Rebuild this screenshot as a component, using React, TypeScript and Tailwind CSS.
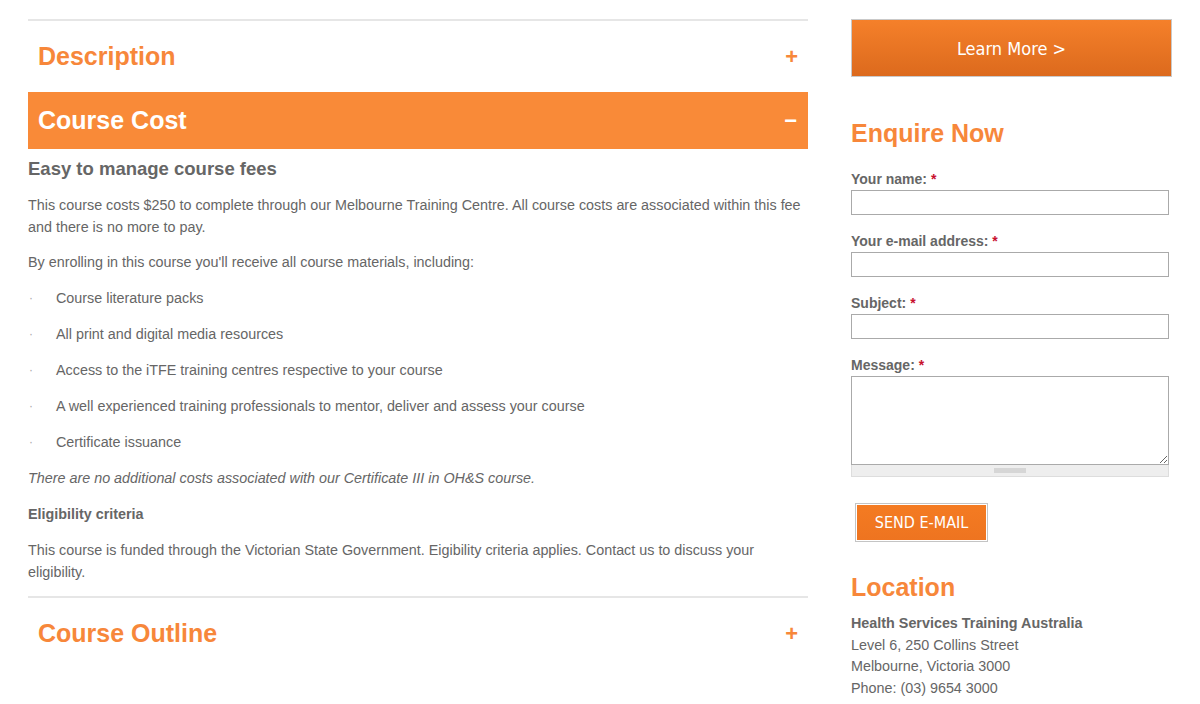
import React from 'react';

const bodyFont = { fontFamily: '"Liberation Sans", Arial, Helvetica, sans-serif' };
const btnFont = { fontFamily: '"DejaVu Sans Condensed", "DejaVu Sans", Tahoma, sans-serif' };

const items = [
  'Course literature packs',
  'All print and digital media resources',
  'Access to the iTFE training centres respective to your course',
  'A well experienced training professionals to mentor, deliver and assess your course',
  'Certificate issuance',
];

function AccordionHeader({ title, open }: { title: string; open?: boolean }) {
  if (open) {
    return (
      <div className="h-[57px] bg-[#f98a38] flex items-center justify-between pl-[10px] pr-[10px]">
        <h2 className="text-[25px] font-bold text-white">{title}</h2>
        <span className="text-white font-bold text-[22px] leading-none mr-[1px]">−</span>
      </div>
    );
  }
  return (
    <div className="h-[57px] flex items-center justify-between pl-[10px] pr-[10px]">
      <h2 className="text-[25px] font-bold text-[#f7873a]">{title}</h2>
      <span className="text-[#f7873a] font-bold text-[22px] leading-none">+</span>
    </div>
  );
}

function Field({ label, textarea }: { label: string; textarea?: boolean }) {
  return (
    <div className="mb-[17px]">
      <label className="block text-[14px] leading-[18px] font-bold text-[#666] mb-[2px]">
        {label} <span className="text-[#c8102e]">*</span>
      </label>
      {textarea ? (
        <div className="w-[318px]">
          <textarea className="block w-full h-[89px] border border-[#aaa] bg-white resize-y outline-none" />
          <div className="h-[12px] bg-[#eee] border border-t-0 border-[#ddd] flex items-center justify-center">
            <div className="w-[32px] h-[5px] bg-[#d6d6d6]" />
          </div>
        </div>
      ) : (
        <input className="block w-[318px] h-[25px] border border-[#aaa] bg-white outline-none" />
      )}
    </div>
  );
}

export default function App() {
  return (
    <div className="w-[1200px] h-[704px] bg-white overflow-hidden flex text-[#666]" style={bodyFont}>
      {/* Colonne principale */}
      <div className="w-[780px] ml-[28px] pt-[19px]">
        <div className="h-[2px] bg-[#e6e6e6]" />
        <div className="mt-[7px] mb-[7px]">
          <AccordionHeader title="Description" />
        </div>
        <AccordionHeader title="Course Cost" open />

        <div className="text-[14.35px] leading-[22px]">
          <h3 className="mt-[8px] text-[18.5px] leading-[24px] font-bold text-[#666]">
            Easy to manage course fees
          </h3>
          <p className="mt-[13px]">
            This course costs $250 to complete through our Melbourne Training Centre. All course costs are associated within this fee and there is no more to pay.
          </p>
          <p className="mt-[13px]">By enrolling in this course you'll receive all course materials, including:</p>
          <ul className="mt-[14px]">
            {items.map((item) => (
              <li key={item} className="flex mb-[14px]">
                <span className="w-[28px] pl-[1px] text-[#aaa] text-[12px]">·</span>
                <span>{item}</span>
              </li>
            ))}
          </ul>
          <p className="italic">There are no additional costs associated with our Certificate III in OH&amp;S course.</p>
          <p className="mt-[14px] font-bold">Eligibility criteria</p>
          <p className="mt-[14px]">
            This course is funded through the Victorian State Government. Eigibility criteria applies. Contact us to discuss your eligibility.
          </p>
        </div>

        <div className="mt-[13px] h-[2px] bg-[#e6e6e6]" />
        <div className="mt-[7px]">
          <AccordionHeader title="Course Outline" />
        </div>
      </div>

      {/* Barre latérale */}
      <div className="w-[321px] ml-[43px] pt-[19px]">
        <button
          className="w-[321px] h-[58px] border border-[#c9c9c9] bg-gradient-to-b from-[#f5802a] to-[#dc6a1d] text-white text-[18px] flex items-center justify-center"
          style={btnFont}
        >
          Learn More &gt;
        </button>

        <h2 className="mt-[41px] text-[25px] leading-[30px] font-bold text-[#f7873a]">Enquire Now</h2>

        <div className="mt-[22px]">
          <Field label="Your name:" />
          <Field label="Your e-mail address:" />
          <Field label="Subject:" />
          <Field label="Message:" textarea />
        </div>

        <div className="mt-[9px] ml-[4px] inline-block border border-[#c4c4c4] p-[1px] bg-white">
          <button
            className="w-[129px] h-[35px] bg-gradient-to-b from-[#f47b22] to-[#ee7420] text-white text-[16px] flex items-center justify-center"
            style={btnFont}
          >
            SEND E-MAIL
          </button>
        </div>

        <h2 className="mt-[30px] text-[25px] leading-[30px] font-bold text-[#f7873a]">Location</h2>
        <div className="mt-[11px] text-[14.35px] leading-[21.5px]">
          <p className="font-bold">Health Services Training Australia</p>
          <p>Level 6, 250 Collins Street</p>
          <p>Melbourne, Victoria 3000</p>
          <p>Phone: (03) 9654 3000</p>
        </div>
      </div>
    </div>
  );
}
